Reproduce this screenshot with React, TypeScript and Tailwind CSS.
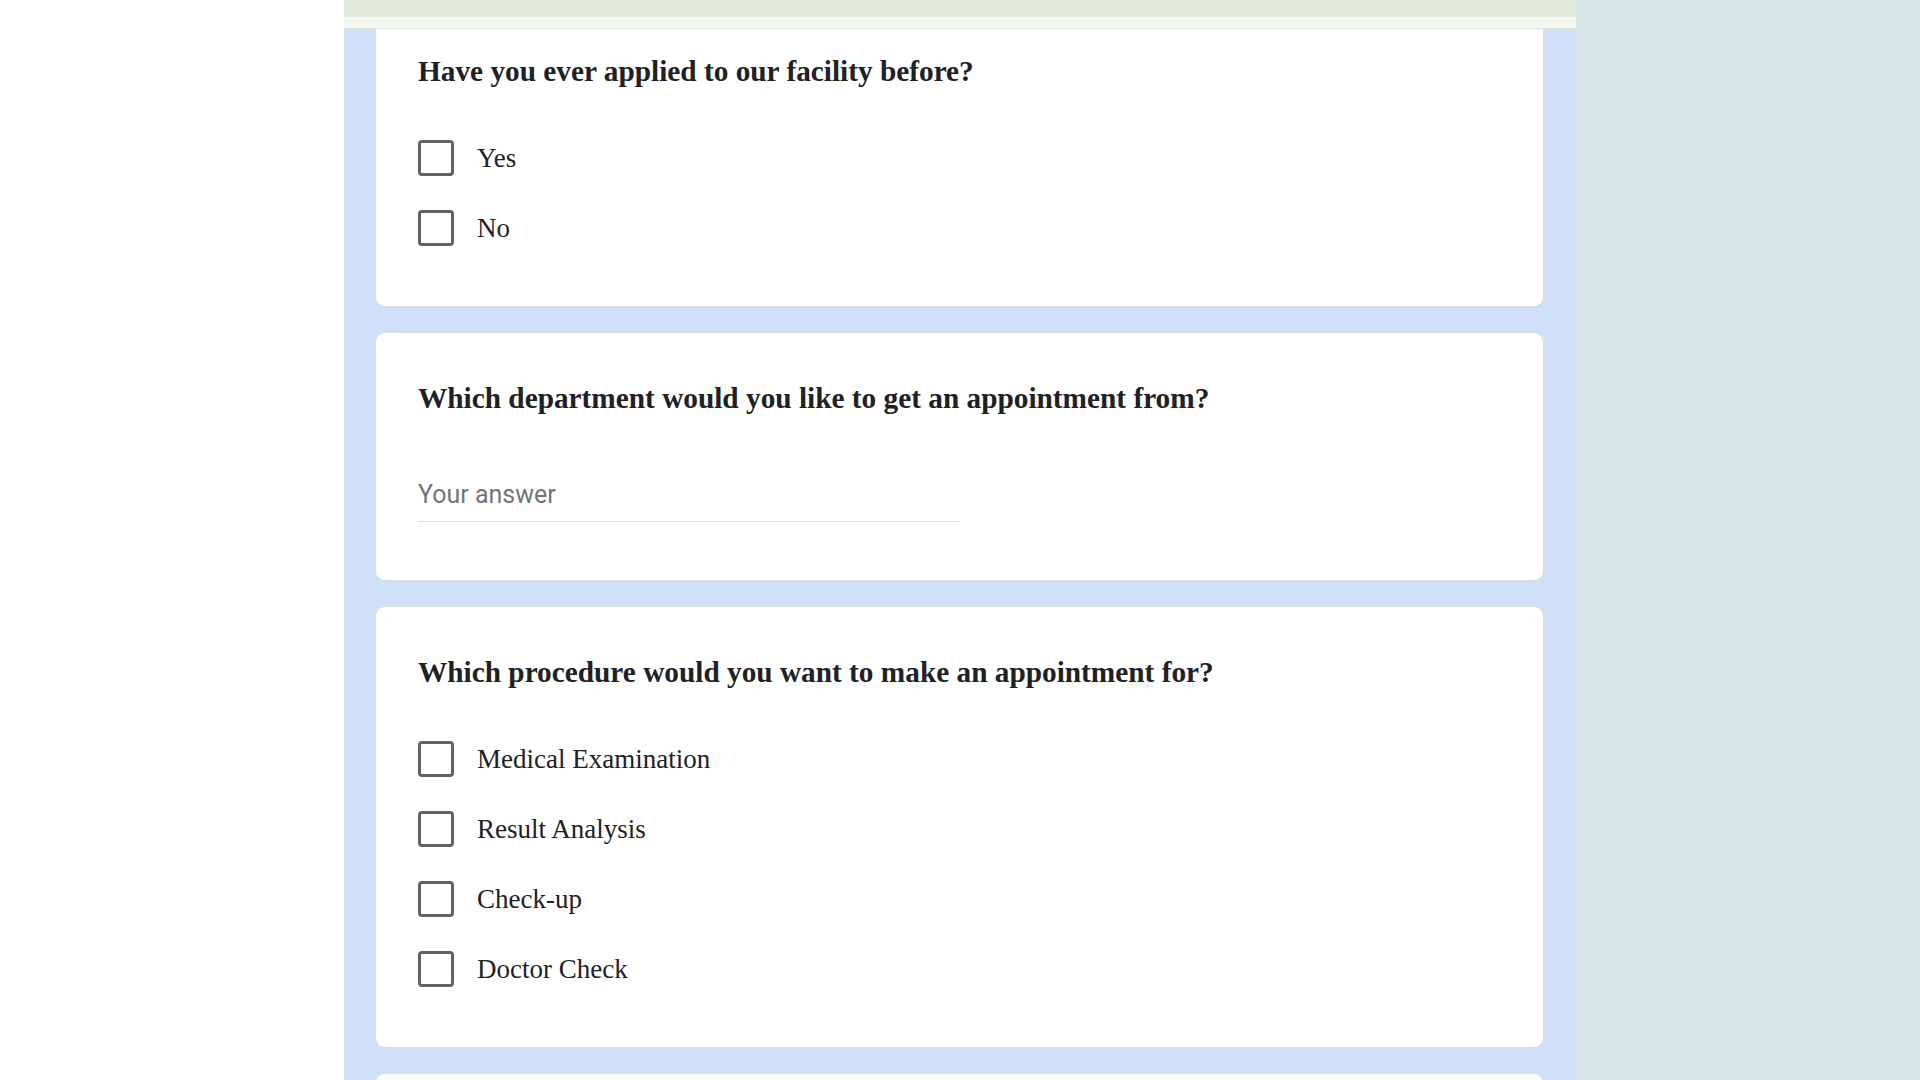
// Appointment form – question cards

const serif = "font-['Liberation_Serif','Times_New_Roman',serif]";

const Checkbox = ({ label }: { label: string }) => (
  <div className="flex h-[70px] items-center gap-[23px]">
    <div className="h-9 w-9 shrink-0 rounded-[4px] border-[3px] border-[#5f6368] bg-white" />
    <span className={`${serif} text-[27px] leading-none text-[#202124]`}>{label}</span>
  </div>
);

const Card = ({ children }: { children?: React.ReactNode }) => (
  <div className="rounded-[10px] border border-[#dadce0] bg-white pl-[42px] pr-8 pt-[47px]">{children}</div>
);

const Title = ({ text }: { text: string }) => (
  <h2 className={`${serif} text-[29.3px] font-bold leading-9 text-[#202124]`}>{text}</h2>
);

const CheckQuestion = ({ title, options }: { title: string; options: string[] }) => (
  <Card>
    <Title text={title} />
    <div className="mt-[34px] pb-[43px]">
      {options.map((o) => (
        <Checkbox key={o} label={o} />
      ))}
    </div>
  </Card>
);

export default function App() {
  return (
    <div className="flex h-screen w-full overflow-hidden bg-white">
      <div className="w-[344px] shrink-0 bg-white" />
      <div className="relative w-[1232px] shrink-0 bg-[#cfe0f8]">
        <div className="absolute inset-x-0 top-0 z-10">
          <div className="h-[17px] bg-[#e3ecdc]" />
          <div className="h-[12px] border-b border-[#dfe6d8] bg-[#f5f8f0]" />
        </div>
        <div className="flex flex-col gap-[25px] pl-[31px] pr-8 pt-[5px]">
          <CheckQuestion title="Have you ever applied to our facility before?" options={['Yes', 'No']} />
          <Card>
            <Title text="Which department would you like to get an appointment from?" />
            <div className="mt-[63px] w-[542px] border-b border-[#e0e0e0] pb-[10px]">
              <span className="block font-['Roboto','Liberation_Sans',sans-serif] text-[25px] leading-8 text-[#70757a]">
                Your answer
              </span>
            </div>
            <div className="h-[58px]" />
          </Card>
          <CheckQuestion
            title="Which procedure would you want to make an appointment for?"
            options={['Medical Examination', 'Result Analysis', 'Check-up', 'Doctor Check']}
          />
          <Card>
            <div className="h-[120px]" />
          </Card>
        </div>
      </div>
      <div className="flex-1 bg-[#d8e5e6]" />
    </div>
  );
}
